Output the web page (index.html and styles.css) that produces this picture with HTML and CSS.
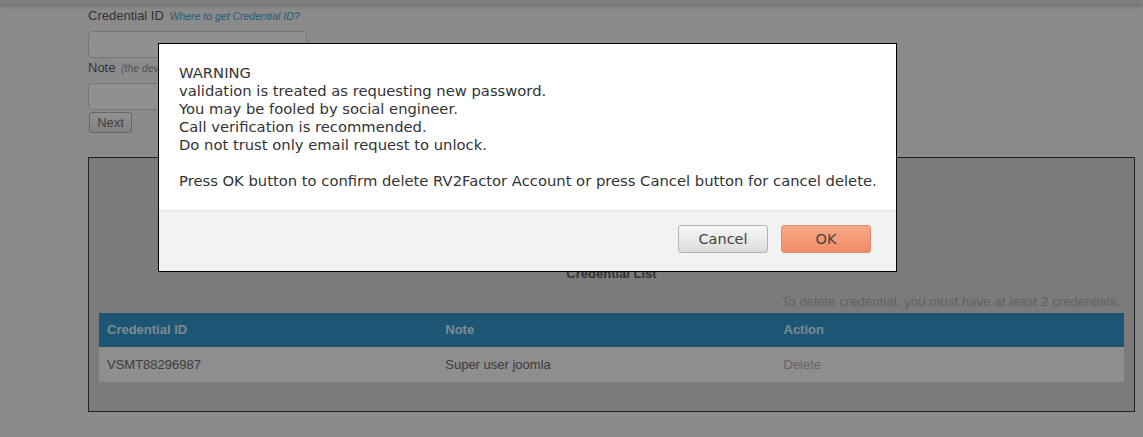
FILE: index.html
```html
<!DOCTYPE html>
<html>
<head>
<meta charset="utf-8">
<title>RV2Factor</title>
<link rel="stylesheet" href="styles.css">
</head>
<body>
<div class="topbar"></div>
<div class="page">
  <form class="cred-form">
    <label class="field-label">Credential ID <a class="help-link" href="#">Where to get Credential ID?</a></label>
    <input class="text-input" type="text">
    <label class="field-label">Note <em class="hint">(the device name)</em></label>
    <input class="text-input" type="text">
    <button class="btn-next" type="button">Next</button>
  </form>

  <section class="cred-box">
    <h3 class="cred-title">Credential List</h3>
    <p class="cred-note">To delete credential, you must have at least 2 credentials.</p>
    <table class="cred-table">
      <colgroup><col class="c1"><col class="c2"><col class="c3"></colgroup>
      <thead>
        <tr><th>Credential ID</th><th>Note</th><th>Action</th></tr>
      </thead>
      <tbody>
        <tr><td>VSMT88296987</td><td>Super user joomla</td><td class="muted">Delete</td></tr>
      </tbody>
    </table>
  </section>
</div>

<div class="backdrop"></div>
<div class="modal">
  <div class="modal-body">
    <p>WARNING<br>validation is treated as requesting new password.<br>You may be fooled by social engineer.<br>Call verification is recommended.<br>Do not trust only email request to unlock.</p>
    <p class="confirm">Press OK button to confirm delete RV2Factor Account or press Cancel button for cancel delete.</p>
  </div>
  <div class="modal-footer">
    <button class="btn btn-cancel" type="button">Cancel</button>
    <button class="btn btn-ok" type="button">OK</button>
  </div>
</div>
</body>
</html>
```

FILE: styles.css
```css
* { box-sizing: border-box; }

html, body {
  margin: 0;
  padding: 0;
}

body {
  background: #e8e8e8;
  font-family: "Liberation Sans", Arial, sans-serif;
  font-size: 13px;
  line-height: 18px;
  color: #555;
  height: 437px;
  overflow: hidden;
}

.topbar {
  height: 4px;
  background: #d2d2d2;
  box-shadow: 0 2px 4px rgba(0, 0, 0, 0.25);
}

.page {
  padding: 0 8px 0 88px;
}

.cred-form {
  display: flex;
  flex-direction: column;
  align-items: flex-start;
  padding-top: 3px;
}

.field-label {
  display: block;
  line-height: 18px;
  margin: 0 0 6px 0;
}

.field-label + .text-input + .field-label {
  margin-top: 1px;
}

.help-link {
  font-size: 10.5px;
  font-style: italic;
  color: #3a98cc;
  text-decoration: none;
  margin-left: 2px;
}

.hint {
  font-size: 10.5px;
  color: #8a8a8a;
  margin-left: 2px;
}

.text-input {
  width: 219px;
  height: 27px;
  border: 1px solid #c4c4c4;
  border-radius: 4px;
  background: #f1f1f1;
  margin: 0;
}

.btn-next {
  margin: 2px 0 0 1px;
  width: 43px;
  height: 21px;
  padding: 0;
  font-family: "Liberation Sans", Arial, sans-serif;
  font-size: 13px;
  color: #6e6e6e;
  background: linear-gradient(#f2f2f2, #dadada);
  border: 1px solid #a8a8a8;
  border-radius: 3px;
}

.cred-box {
  margin-top: 24px;
  height: 255px;
  border: 1px solid #383838;
  background: #cdcdcd;
  padding: 107px 10px 0 10px;
}

.cred-title {
  margin: 0 0 10px 0;
  text-align: center;
  font-size: 13px;
  line-height: 18px;
  font-weight: bold;
  color: #555;
}

.cred-note {
  margin: 0 0 2px 0;
  text-align: right;
  padding-right: 4px;
  font-size: 13.3px;
  line-height: 18px;
  color: #a2a2a2;
}

.cred-table {
  width: 100%;
  border-collapse: collapse;
  table-layout: fixed;
}

.cred-table .c1, .cred-table .c2 { width: 33%; }
.cred-table .c3 { width: 34%; }

.cred-table th {
  background: #3090c2;
  color: #d2e4ef;
  text-align: left;
  font-weight: bold;
  font-size: 13px;
  line-height: 18px;
  padding: 8px;
}

.cred-table td {
  background: #ededed;
  color: #656565;
  font-size: 13px;
  line-height: 18px;
  padding: 9px 8px 8px 8px;
}

.cred-table td.muted {
  color: #a6a6a6;
}

.backdrop {
  position: fixed;
  inset: 0;
  background: rgba(0, 0, 0, 0.4);
}

.modal {
  position: fixed;
  left: 158px;
  top: 43px;
  width: 739px;
  background: #fff;
  border: 1px solid #000;
  font-family: "DejaVu Sans", Verdana, sans-serif;
  font-size: 14.75px;
  line-height: 18px;
  color: #333;
}

.modal-body {
  padding: 20px 10px 20px 20px;
}

.modal-body p {
  margin: 0;
}

.modal-body .confirm {
  margin-top: 18px;
  white-space: nowrap;
}

.modal-footer {
  background: #f2f2f2;
  border-top: 1px solid #e4e4e4;
  padding: 14px 25px 18px 20px;
  display: flex;
  justify-content: flex-end;
  gap: 13px;
}

.btn {
  width: 90px;
  height: 28px;
  padding: 0;
  font-family: "DejaVu Sans", Verdana, sans-serif;
  font-size: 14.5px;
  color: #444;
  border-radius: 3px;
}

.btn-cancel {
  background: linear-gradient(#f7f7f7, #dcdcdc);
  border: 1px solid #b3b3b3;
}

.btn-ok {
  background: linear-gradient(#f9aa86, #f08c66);
  border: 1px solid #d98a70;
}
```
